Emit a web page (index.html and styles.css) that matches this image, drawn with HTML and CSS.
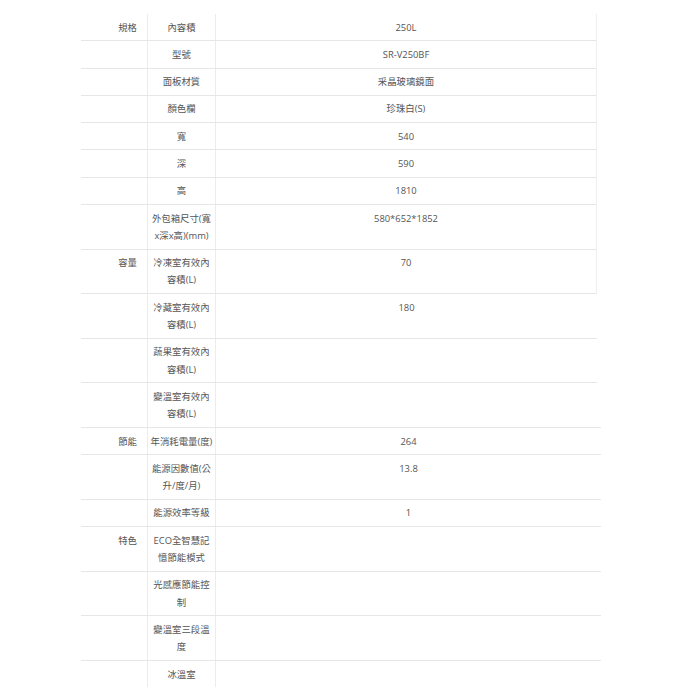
FILE: index.html
```html
<!DOCTYPE html>
<html lang="zh-Hant">
<head>
<meta charset="utf-8">
<title>規格</title>
<link rel="stylesheet" href="styles.css">
</head>
<body>
<div class="spec">
  <div class="row edge"><div class="cat">規格</div><div class="key">內容積</div><div class="val">250L</div></div>
  <div class="row edge"><div class="cat"></div><div class="key">型號</div><div class="val">SR-V250BF</div></div>
  <div class="row edge"><div class="cat"></div><div class="key">面板材質</div><div class="val">采晶玻璃鏡面</div></div>
  <div class="row edge"><div class="cat"></div><div class="key">顏色欄</div><div class="val">珍珠白(S)</div></div>
  <div class="row edge"><div class="cat"></div><div class="key">寬</div><div class="val">540</div></div>
  <div class="row edge"><div class="cat"></div><div class="key">深</div><div class="val">590</div></div>
  <div class="row edge"><div class="cat"></div><div class="key">高</div><div class="val">1810</div></div>
  <div class="row edge"><div class="cat"></div><div class="key">外包箱尺寸(寬x深x高)(mm)</div><div class="val">580*652*1852</div></div>
  <div class="row edge"><div class="cat">容量</div><div class="key">冷凍室有效內容積(L)</div><div class="val">70</div></div>
  <div class="row mid"><div class="cat"></div><div class="key">冷藏室有效內容積(L)</div><div class="val">180</div></div>
  <div class="row mid"><div class="cat"></div><div class="key">蔬果室有效內容積(L)</div><div class="val"></div></div>
  <div class="row wide"><div class="cat"></div><div class="key">變溫室有效內容積(L)</div><div class="val"></div></div>
  <div class="row wide"><div class="cat">節能</div><div class="key">年消耗電量(度)</div><div class="val">264</div></div>
  <div class="row wide"><div class="cat"></div><div class="key">能源因數值(公升/度/月)</div><div class="val">13.8</div></div>
  <div class="row wide"><div class="cat"></div><div class="key">能源效率等級</div><div class="val">1</div></div>
  <div class="row wide"><div class="cat">特色</div><div class="key">ECO全智慧記憶節能模式</div><div class="val"></div></div>
  <div class="row wide"><div class="cat"></div><div class="key">光感應節能控制</div><div class="val"></div></div>
  <div class="row wide"><div class="cat"></div><div class="key">變溫室三段溫度</div><div class="val"></div></div>
  <div class="row wide last"><div class="cat"></div><div class="key">冰溫室</div><div class="val"></div></div>
</div>
</body>
</html>
```

FILE: styles.css
```css
html, body {
  margin: 0;
  padding: 0;
  background: #ffffff;
}

body {
  padding: 14px 0 0 81px;
  font-family: "Open Sans", "Noto Sans CJK TC", sans-serif;
  font-size: 9.4px;
  line-height: 17.3px;
  color: #555555;
}

.spec {
  display: flex;
  flex-direction: column;
}

.row {
  display: grid;
  grid-template-columns: 67px 68px 1fr;
  border-bottom: 1px solid #e6e6e6;
  box-sizing: border-box;
}

.row.edge {
  width: 516px;
  border-right: 1px solid #efefef;
}

.row.mid {
  width: 516px;
}

.row.wide {
  width: 520px;
}

.row.last {
  border-bottom: none;
}

.cat,
.key,
.val {
  padding: 4.5px 0;
}

.cat {
  text-align: right;
  padding-right: 10px;
  border-right: 1px solid #ececec;
}

.key {
  text-align: center;
  padding-left: 2px;
  padding-right: 2px;
  border-right: 1px solid #ececec;
  word-break: break-all;
}

.val {
  text-align: center;
}
```
